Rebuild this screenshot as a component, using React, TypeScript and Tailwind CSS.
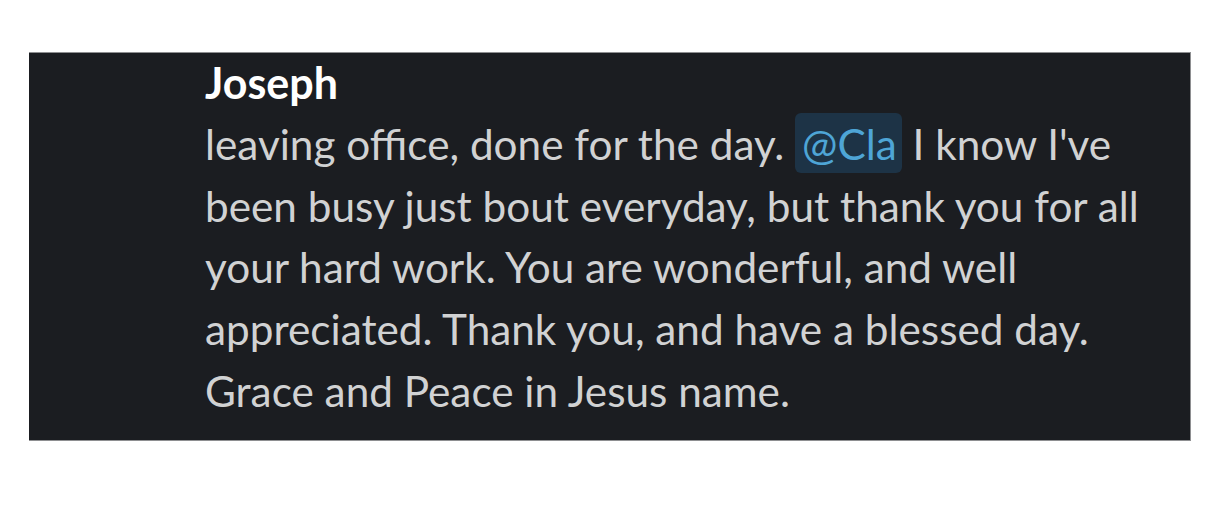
import React from "react";

export default function App() {
  return (
    <div className="w-[1220px] h-[512px] bg-white pt-[52px] pl-[29px]" style={{ fontFamily: "Lato, 'Noto Sans', sans-serif" }}>
      <div className="w-[1162px] h-[389px] bg-[#1b1d21] border-t border-r border-b border-[#8e8f91] pl-[176px]">
        <div className="text-[43px] leading-[60px] font-bold text-white">Joseph</div>
        <div className="text-[42.3px] leading-[61.7px] text-[#d1d2d3] w-[960px]">
          leaving office, done for the day.{" "}
          <span className="bg-[#1d3346] text-[#4ea5d6] rounded-[6px] pl-[7px] pr-[5px] pt-[5px] pb-[4px]">@Cla</span>{" "}
          I know I've been busy just bout everyday, but thank you for all your hard work. You are wonderful, and well appreciated. Thank you, and have a blessed day. Grace and Peace in Jesus name.
        </div>
      </div>
    </div>
  );
}
